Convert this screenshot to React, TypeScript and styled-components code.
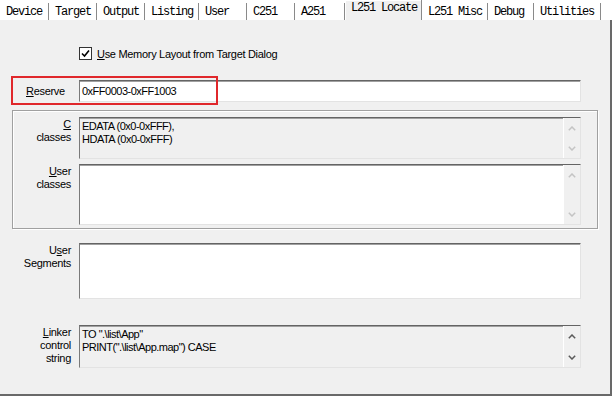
import React from "react";
import styled, { createGlobalStyle } from "styled-components";

const GlobalStyle = createGlobalStyle`
  body {
    margin: 0;
    background: #f0f0f0;
    font-family: "Liberation Sans", Arial, sans-serif;
  }
`;

const Page = styled.div`
  width: 612px;
  height: 396px;
  overflow: hidden;
  background: #ffffff;
`;

const TabStrip = styled.div`
  display: flex;
  align-items: flex-end;
  height: 20px;
  background: #ffffff;
`;

const Tab = styled.div<{ $w: number; $active?: boolean }>`
  box-sizing: border-box;
  width: ${(p) => p.$w}px;
  height: ${(p) => (p.$active ? 20 : 17)}px;
  padding: 0 0 ${(p) => (p.$active ? 4 : 0)}px 6px;
  display: flex;
  align-items: center;
  background: ${(p) => (p.$active ? "#f0f0f0" : "#ffffff")};
  border-right: 1px solid #8a8a8a;
  box-shadow: ${(p) => (p.$active ? "inset 1px 1px 0 #ffffff" : "none")};
  font-family: "Liberation Mono", "DejaVu Sans Mono", monospace;
  font-size: 12px;
  letter-spacing: -1.2px;
  color: #000;
  white-space: pre;
`;

const Panel = styled.div`
  box-sizing: border-box;
  height: 376px;
  padding-top: 27px;
  background: #f0f0f0;
  border-right: 2px solid #696969;
  border-bottom: 2px solid #696969;
  font-size: 11px;
  letter-spacing: -0.3px;
  color: #000;
`;

const CheckRow = styled.label`
  display: flex;
  align-items: center;
  gap: 5px;
  margin-left: 79px;
  height: 13px;
`;

const CheckBox = styled.span`
  box-sizing: border-box;
  width: 13px;
  height: 13px;
  border: 1px solid #333333;
  background: #ffffff;
  display: flex;
  align-items: center;
  justify-content: center;
`;

const FieldRow = styled.div<{ $label: number; $top?: number }>`
  position: relative;
  display: grid;
  grid-template-columns: ${(p) => p.$label}px 502px;
  column-gap: 8px;
  margin-top: ${(p) => p.$top ?? 0}px;
`;

const Label = styled.div<{ $left?: boolean; $pad?: number }>`
  text-align: ${(p) => (p.$left ? "left" : "right")};
  padding-left: ${(p) => (p.$left ? 26 : 0)}px;
  padding-top: ${(p) => p.$pad ?? 1}px;
  line-height: 13px;

  u {
    text-decoration-thickness: 1px;
    text-underline-offset: 1px;
  }
`;

const Box = styled.div<{ $h: number; $gray?: boolean }>`
  box-sizing: border-box;
  height: ${(p) => p.$h}px;
  display: flex;
  background: ${(p) => (p.$gray ? "#f0f0f0" : "#ffffff")};
  border-top: 1px solid #646464;
  border-left: 1px solid #7a7a7a;
  border-right: 1px solid #e3e3e3;
  border-bottom: 1px solid #e3e3e3;
  box-shadow: inset 0 1px 0 #a0a0a0;
`;

const BoxText = styled.div<{ $center?: boolean }>`
  flex: 1;
  padding: ${(p) => (p.$center ? "0 2px" : "2px 2px")};
  display: ${(p) => (p.$center ? "flex" : "block")};
  align-items: center;
  line-height: 13px;
  letter-spacing: -0.5px;
  white-space: pre;
`;

const ScrollBar = styled.div`
  width: 17px;
  display: flex;
  flex-direction: column;
  justify-content: space-between;
  align-items: center;
  padding: 8px 0 7px;
  box-sizing: border-box;
  background: #f0f0f0;
  border-left: 1px solid #ffffff;
`;

const GroupBox = styled.div`
  box-sizing: border-box;
  width: 586px;
  margin: 8px 0 0 12px;
  padding: 6px 0 3px;
  display: flex;
  flex-direction: column;
  gap: 5px;
  border: 1px solid #a0a0a0;
  box-shadow: inset 1px 1px 0 #ffffff, 1px 1px 0 #ffffff;
`;

const Highlight = styled.div`
  position: absolute;
  left: 11px;
  top: -4px;
  width: 207px;
  height: 29px;
  box-sizing: border-box;
  border: 2px solid #e0272b;
  pointer-events: none;
`;

const Chevron = ({ up, color }: { up?: boolean; color: string }) => (
  <svg width="8" height="5" viewBox="0 0 8 5">
    <polyline
      points={up ? "0.8,4.2 4,1 7.2,4.2" : "0.8,0.8 4,4 7.2,0.8"}
      fill="none"
      stroke={color}
      strokeWidth="1.5"
    />
  </svg>
);

const Scroll = ({ enabled }: { enabled?: boolean }) => {
  const c = enabled ? "#5a5a5a" : "#c4c4c4";
  return (
    <ScrollBar>
      <Chevron up color={c} />
      <Chevron color={c} />
    </ScrollBar>
  );
};

const tabs = [
  { name: "Device", w: 49 },
  { name: "Target", w: 48 },
  { name: "Output", w: 48 },
  { name: "Listing", w: 54 },
  { name: "User", w: 48 },
  { name: "C251", w: 48 },
  { name: "A251", w: 50 },
  { name: "L251 Locate", w: 77, active: true },
  { name: "L251 Misc", w: 66 },
  { name: "Debug", w: 46 },
  { name: "Utilities", w: 67 },
];

export default function App() {
  return (
    <>
      <GlobalStyle />
      <Page>
        <TabStrip>
          {tabs.map((t) => (
            <Tab key={t.name} $w={t.w} $active={t.active}>
              {t.name}
            </Tab>
          ))}
        </TabStrip>
        <Panel>
          <CheckRow>
            <CheckBox>
              <svg width="9" height="9" viewBox="0 0 9 9">
                <polyline
                  points="1,4.5 3.5,7 8,1.5"
                  fill="none"
                  stroke="#000"
                  strokeWidth="1.6"
                />
              </svg>
            </CheckBox>
            <span>
              <u>U</u>se Memory Layout from Target Dialog
            </span>
          </CheckRow>

          <FieldRow $label={71} $top={20}>
            <Label $left $pad={5}>
              <u>R</u>eserve
            </Label>
            <Box $h={22}>
              <BoxText $center>0xFF0003-0xFF1003</BoxText>
            </Box>
            <Highlight />
          </FieldRow>

          <GroupBox>
            <FieldRow $label={58}>
              <Label>
                <u>C</u>
                <br />
                classes
              </Label>
              <Box $h={42} $gray>
                <BoxText>
                  {"EDATA (0x0-0xFFF),\nHDATA (0x0-0xFFF)"}
                </BoxText>
                <Scroll />
              </Box>
            </FieldRow>
            <FieldRow $label={58}>
              <Label>
                <u>U</u>ser
                <br />
                classes
              </Label>
              <Box $h={61}>
                <BoxText />
                <Scroll />
              </Box>
            </FieldRow>
          </GroupBox>

          <FieldRow $label={71} $top={14}>
            <Label>
              U<u>s</u>er
              <br />
              Segments
            </Label>
            <Box $h={56}>
              <BoxText />
            </Box>
          </FieldRow>

          <FieldRow $label={71} $top={26}>
            <Label>
              <u>L</u>inker
              <br />
              control
              <br />
              string
            </Label>
            <Box $h={43} $gray>
              <BoxText>
                {'TO ".\\list\\App"\nPRINT(".\\list\\App.map") CASE'}
              </BoxText>
              <Scroll enabled />
            </Box>
          </FieldRow>
        </Panel>
      </Page>
    </>
  );
}
